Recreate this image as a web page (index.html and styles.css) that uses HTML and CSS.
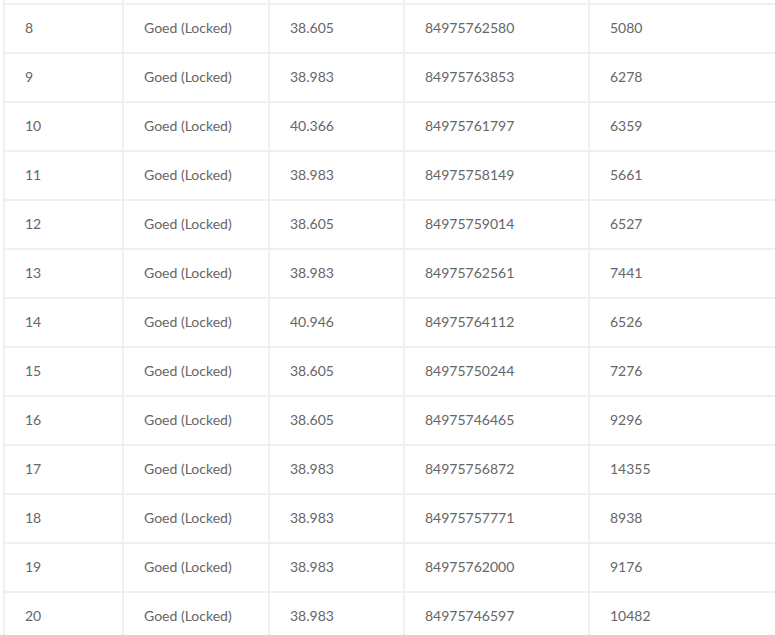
FILE: index.html
```html
<!DOCTYPE html>
<html lang="nl">
<head>
    <meta charset="UTF-8">
    <meta name="viewport" content="width=device-width, initial-scale=1.0">
    <title>Resultaten</title>
    <link rel="stylesheet" href="styles.css">
</head>
<body>

<div class="table-wrap">
    <table class="result-table">
        <tbody>
            <tr class="row-hidden"><td></td><td></td><td></td><td></td><td></td></tr>
            <tr><td>8</td><td>Goed (Locked)</td><td>38.605</td><td>84975762580</td><td>5080</td></tr>
            <tr><td>9</td><td>Goed (Locked)</td><td>38.983</td><td>84975763853</td><td>6278</td></tr>
            <tr><td>10</td><td>Goed (Locked)</td><td>40.366</td><td>84975761797</td><td>6359</td></tr>
            <tr><td>11</td><td>Goed (Locked)</td><td>38.983</td><td>84975758149</td><td>5661</td></tr>
            <tr><td>12</td><td>Goed (Locked)</td><td>38.605</td><td>84975759014</td><td>6527</td></tr>
            <tr><td>13</td><td>Goed (Locked)</td><td>38.983</td><td>84975762561</td><td>7441</td></tr>
            <tr><td>14</td><td>Goed (Locked)</td><td>40.946</td><td>84975764112</td><td>6526</td></tr>
            <tr><td>15</td><td>Goed (Locked)</td><td>38.605</td><td>84975750244</td><td>7276</td></tr>
            <tr><td>16</td><td>Goed (Locked)</td><td>38.605</td><td>84975746465</td><td>9296</td></tr>
            <tr><td>17</td><td>Goed (Locked)</td><td>38.983</td><td>84975756872</td><td>14355</td></tr>
            <tr><td>18</td><td>Goed (Locked)</td><td>38.983</td><td>84975757771</td><td>8938</td></tr>
            <tr><td>19</td><td>Goed (Locked)</td><td>38.983</td><td>84975762000</td><td>9176</td></tr>
            <tr><td>20</td><td>Goed (Locked)</td><td>38.983</td><td>84975746597</td><td>10482</td></tr>
        </tbody>
    </table>
</div>

</body>
</html>
```

FILE: styles.css
```css
body {
    font-family: Lato, "Open Sans", Arial, sans-serif;
    margin: 0;
    background-color: #fff;
    overflow: hidden;
}

.table-wrap {
    padding-left: 3px;
    margin-top: -46px; /* list is scrolled down a bit */
}

.result-table {
    border-collapse: separate;
    border-spacing: 0;
    table-layout: fixed;
    width: 785px;
}

.result-table td {
    box-sizing: border-box;
    height: 49px;
    padding: 0 20px 2px 20px;
    border-top: 2px solid #f0f0f0;
    border-left: 2px solid #f0f0f0;
    color: #666;
    font-size: 14px;
    vertical-align: middle;
    white-space: nowrap;
}

.result-table td:nth-child(1) { width: 119px; }
.result-table td:nth-child(2) { width: 146px; }
.result-table td:nth-child(3) { width: 135px; }
.result-table td:nth-child(4) { width: 185px; }
.result-table td:nth-child(5) { width: 200px; }
```
